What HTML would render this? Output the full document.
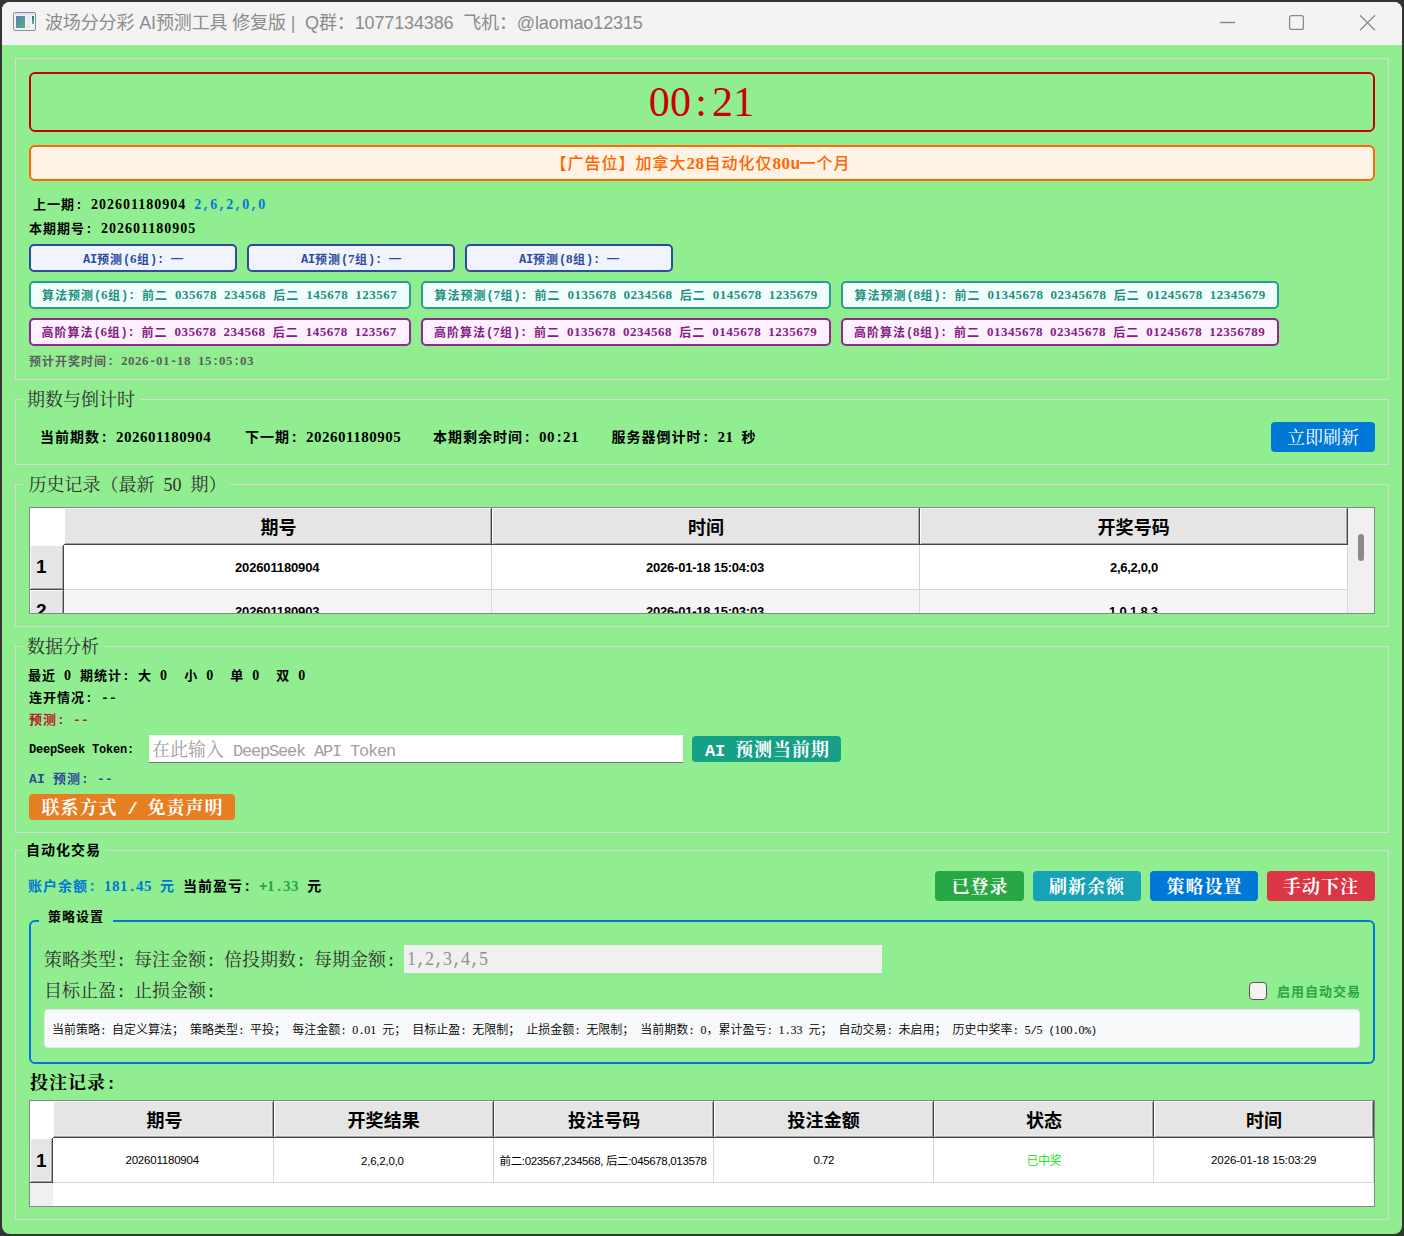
<!DOCTYPE html>
<html lang="zh-CN">
<head>
<meta charset="utf-8">
<title>波场分分彩 AI预测工具 修复版</title>
<style>
*{margin:0;padding:0;box-sizing:border-box}
html,body{width:1404px;height:1236px;overflow:hidden;background:#343434}
body{position:relative;font-family:"Liberation Serif","Noto Serif CJK SC",serif;color:#000}
#win{position:absolute;left:2px;top:2px;width:1400px;height:1232px;background:linear-gradient(#f3f3f3 0,#f3f3f3 43px,#90ee90 43px);border-radius:8px;overflow:hidden}
#tbar{position:absolute;left:0;top:0;width:1400px;height:43px;background:#f3f3f3}
#app{position:absolute;left:-2px;top:-2px;width:1404px;height:1236px}
.abs,.t,.b{position:absolute}
.t{white-space:pre;line-height:1}
.t i{font-style:normal;font-family:"Liberation Serif",serif}
.t b{font-family:"Liberation Mono",monospace}
.t s{text-decoration:none;position:relative;top:-2px}
.se{font-family:"Liberation Serif","Noto Serif CJK SC",serif}
.sa{font-family:"Liberation Sans","Noto Sans CJK SC",sans-serif}
.bd{font-weight:700}
.gb{position:absolute;border:1px solid #d9d9d9}
.gt{position:absolute;background:#90ee90;height:3px}
.box{position:absolute;border:2px solid;border-radius:5px}
.btn{position:absolute;border-radius:4px}
.tbl{position:absolute;background:#fff;border:1px solid #828790;overflow:hidden}
.th,.rh{position:absolute;background:#e5e5e5;border-right:1px solid #484848;border-bottom:1px solid #484848;box-shadow:inset 1px 1px 0 #fdfdfd,inset -1px -1px 0 #a2a2a2,inset -2px -2px 0 #ececec}
.vl{position:absolute;width:1px;background:#d8d8d8}
.hl{position:absolute;height:1px;background:#d8d8d8}
.s16bs{font-family:"Liberation Sans","Noto Sans CJK SC",sans-serif;font-size:16px;font-weight:500;letter-spacing:1px}.s16bs i{font-size:17px;letter-spacing:0.5px;font-weight:700}.s16bs b{font-size:16px;letter-spacing:-0.60px;font-weight:700}
.s13bs{font-family:"Liberation Sans","Noto Sans CJK SC",sans-serif;font-size:13px;font-weight:700;letter-spacing:1px}.s13bs i{font-size:14px;letter-spacing:1px;font-weight:700}.s13bs b{font-size:13px;letter-spacing:0.20px;font-weight:700}
.s12bs{font-family:"Liberation Sans","Noto Sans CJK SC",sans-serif;font-size:12px;font-weight:700;letter-spacing:1px}.s12bs i{font-size:13px;letter-spacing:0.5px;font-weight:700}.s12bs b{font-size:12px;letter-spacing:-0.20px;font-weight:700}.s12bs i,.s12bs b{position:relative;top:-1px}
.s18r{font-size:18px;font-weight:400;letter-spacing:0px}.s18r i{font-size:18px;letter-spacing:0px;font-weight:400}.s18r b{font-size:17px;letter-spacing:-1.20px;font-weight:400}
.s14bs{font-family:"Liberation Sans","Noto Sans CJK SC",sans-serif;font-size:14px;font-weight:700;letter-spacing:1px}.s14bs i{font-size:15px;letter-spacing:0.5px;font-weight:700}.s14bs b{font-size:14px;letter-spacing:-0.40px;font-weight:700}
.s18b{font-size:18px;font-weight:700;letter-spacing:1px}.s18b i{font-size:19px;letter-spacing:0.5px;font-weight:700}.s18b b{font-size:17px;letter-spacing:-0.20px;font-weight:700}
.s12rw350s{font-family:"Liberation Sans","Noto Sans CJK SC",sans-serif;font-size:12px;font-weight:350;letter-spacing:0px}.s12rw350s i{font-size:12px;letter-spacing:0px;font-weight:400}.s12rw350s b{font-size:11px;letter-spacing:-0.60px;font-weight:400}
</style>
</head>
<body>
<div id="win"><div id="tbar"></div><div id="app">
<svg class="abs" style="left:12px;top:11px" width="25" height="21" viewBox="0 0 25 21">
<defs><linearGradient id="g1" x1="0" y1="0" x2="1" y2="1"><stop offset="0" stop-color="#5a7fc0"/><stop offset="0.5" stop-color="#4f9a96"/><stop offset="1" stop-color="#62b06a"/></linearGradient>
<linearGradient id="g2" x1="0" y1="0" x2="0" y2="1"><stop offset="0" stop-color="#3f5fa8"/><stop offset="1" stop-color="#6cc060"/></linearGradient></defs>
<rect x="1.5" y="1.5" width="22" height="18" rx="1.5" fill="#eef2fa" stroke="#8a8e96" stroke-width="1"/>
<rect x="2.2" y="2.2" width="20.6" height="1.6" fill="#d9dee8"/>
<rect x="4" y="5" width="9" height="12" fill="url(#g1)"/>
<rect x="14.2" y="5" width="4.6" height="7" fill="#ececec"/>
<rect x="20" y="5" width="2" height="8" fill="url(#g2)"/>
<rect x="14.2" y="13.5" width="4" height="3.5" fill="#e6e6e6"/>
</svg>
<svg class="abs" style="left:1210px;top:8px" width="180" height="30" viewBox="0 0 180 30" fill="none" stroke="#8a8a8a" stroke-width="1.3">
<path d="M10 14.5H25"/>
<rect x="79.6" y="7.6" width="13.8" height="13.8" rx="2"/>
<path d="M150 7.2L165 22.2M165 7.2L150 22.2"/>
</svg>
<div class="gb" style="left:15px;top:58px;width:1374px;height:322px"></div>
<div class="gb" style="left:15px;top:399px;width:1374px;height:66px"></div><div class="gt" style="left:23px;top:398px;width:117px"></div>
<div class="gb" style="left:15px;top:484px;width:1374px;height:143px"></div><div class="gt" style="left:23px;top:483px;width:207px"></div>
<div class="gb" style="left:15px;top:646px;width:1374px;height:187px"></div><div class="gt" style="left:23px;top:645px;width:81px"></div>
<div class="gb" style="left:15px;top:850px;width:1374px;height:370px"></div><div class="gt" style="left:23px;top:849px;width:83px"></div>
<div class="box" style="left:29px;top:72px;width:1346px;height:60px;border-color:#cc0000;background:transparent;border-radius:6px;border-width:2px"></div>
<div class="box" style="left:29px;top:145px;width:1346px;height:36px;border-color:#ff6600;background:#fff3e6;border-radius:6px;border-width:2px"></div>
<div class="box" style="left:29px;top:244px;width:208px;height:28px;border-color:#2f4b9c;background:#f0f4ff;border-radius:5px;border-width:2px"></div>
<div class="box" style="left:247px;top:244px;width:208px;height:28px;border-color:#2f4b9c;background:#f0f4ff;border-radius:5px;border-width:2px"></div>
<div class="box" style="left:465px;top:244px;width:208px;height:28px;border-color:#2f4b9c;background:#f0f4ff;border-radius:5px;border-width:2px"></div>
<div class="box" style="left:29px;top:281px;width:382px;height:28px;border-color:#2a9d8f;background:#f0fffe;border-radius:5px;border-width:2px"></div>
<div class="box" style="left:29px;top:318px;width:382px;height:28px;border-color:#8e2a8e;background:#fdf0ff;border-radius:5px;border-width:2px"></div>
<div class="box" style="left:421px;top:281px;width:410px;height:28px;border-color:#2a9d8f;background:#f0fffe;border-radius:5px;border-width:2px"></div>
<div class="box" style="left:421px;top:318px;width:410px;height:28px;border-color:#8e2a8e;background:#fdf0ff;border-radius:5px;border-width:2px"></div>
<div class="box" style="left:841px;top:281px;width:438px;height:28px;border-color:#2a9d8f;background:#f0fffe;border-radius:5px;border-width:2px"></div>
<div class="box" style="left:841px;top:318px;width:438px;height:28px;border-color:#8e2a8e;background:#fdf0ff;border-radius:5px;border-width:2px"></div>
<div class="btn" style="left:1271px;top:422px;width:104px;height:30px;background:#0078d7;border-radius:4px"></div>
<div class="tbl" style="left:29px;top:507px;width:1346px;height:107px">
<div class="abs" style="left:1318px;top:0px;width:26px;height:105px;background:#f0f0f0;"></div>
<div class="abs" style="left:1328px;top:26px;width:6px;height:27px;background:#8a8a8a;border-radius:3px"></div>
<div class="abs" style="left:0px;top:82px;width:1318px;height:23px;background:#f5f5f5;"></div>
<div class="th" style="left:34px;top:0px;width:428px;height:37px"></div>
<div class="th" style="left:462px;top:0px;width:428px;height:37px"></div>
<div class="th" style="left:890px;top:0px;width:428px;height:37px"></div>
<div class="rh" style="left:0px;top:37px;width:34px;height:45px"></div>
<div class="rh" style="left:0px;top:82px;width:34px;height:45px"></div>
<div class="abs" style="left:461px;top:37px;width:1px;height:68px;background:#d8d8d8;"></div>
<div class="abs" style="left:889px;top:37px;width:1px;height:68px;background:#d8d8d8;"></div>
<div class="abs" style="left:1317px;top:37px;width:1px;height:68px;background:#d8d8d8;"></div>
<div class="abs" style="left:34px;top:81px;width:1284px;height:1px;background:#d8d8d8;"></div>
</div>
<div class="abs" style="left:149px;top:735px;width:534px;height:28px;background:#fff;border-bottom:1px solid #7a7a7a"></div>
<div class="btn" style="left:692px;top:736px;width:149px;height:26px;background:#16a085;border-radius:4px"></div>
<div class="btn" style="left:29px;top:794px;width:206px;height:26px;background:#e67e22;border-radius:4px"></div>
<div class="btn" style="left:935px;top:871px;width:89px;height:30px;background:#28a745;border-radius:4px"></div>
<div class="btn" style="left:1033px;top:871px;width:108px;height:30px;background:#17a2b8;border-radius:4px"></div>
<div class="btn" style="left:1150px;top:871px;width:108px;height:30px;background:#0078d7;border-radius:4px"></div>
<div class="btn" style="left:1267px;top:871px;width:108px;height:30px;background:#dc3545;border-radius:4px"></div>
<div class="box" style="left:29px;top:920px;width:1346px;height:144px;border-color:#0078d7;background:transparent;border-radius:6px;border-width:2px"></div>
<div class="abs" style="left:39px;top:919px;width:74px;height:4px;background:#90ee90;"></div>
<div class="abs" style="left:404px;top:945px;width:478px;height:28px;background:#f0f0f0;"></div>
<div class="abs" style="left:1249px;top:982px;width:18px;height:18px;background:#f3f3f3;border:1px solid #555;border-radius:4px"></div>
<div class="abs" style="left:44px;top:1009px;width:1316px;height:39px;background:#f8f9fa;border-radius:4px;border:1px solid #e4e6ea"></div>
<div class="tbl" style="left:29px;top:1100px;width:1346px;height:107px">
<div class="abs" style="left:0px;top:82px;width:23px;height:23px;background:#f0f0f0;"></div>
<div class="th" style="left:23px;top:0px;width:221px;height:37px"></div>
<div class="abs" style="left:243px;top:37px;width:1px;height:45px;background:#d8d8d8;"></div>
<div class="th" style="left:244px;top:0px;width:220px;height:37px"></div>
<div class="abs" style="left:463px;top:37px;width:1px;height:45px;background:#d8d8d8;"></div>
<div class="th" style="left:464px;top:0px;width:220px;height:37px"></div>
<div class="abs" style="left:683px;top:37px;width:1px;height:45px;background:#d8d8d8;"></div>
<div class="th" style="left:684px;top:0px;width:220px;height:37px"></div>
<div class="abs" style="left:903px;top:37px;width:1px;height:45px;background:#d8d8d8;"></div>
<div class="th" style="left:904px;top:0px;width:220px;height:37px"></div>
<div class="abs" style="left:1123px;top:37px;width:1px;height:45px;background:#d8d8d8;"></div>
<div class="th" style="left:1124px;top:0px;width:220px;height:37px"></div>
<div class="abs" style="left:1343px;top:37px;width:1px;height:45px;background:#d8d8d8;"></div>
<div class="rh" style="left:0px;top:37px;width:23px;height:45px"></div>
<div class="abs" style="left:23px;top:81px;width:1321px;height:1px;background:#d8d8d8;"></div>
</div>
<div class="t se" style="left:0;top:77px;width:1404px;height:50px;font-size:42px;color:#cc0000;line-height:50px"><span style="position:absolute;left:644.20px;width:30px;text-align:center">0</span><span style="position:absolute;left:665.55px;width:30px;text-align:center">0</span><span style="position:absolute;left:686.00px;width:30px;text-align:center">:</span><span style="position:absolute;left:707.40px;width:30px;text-align:center">2</span><span style="position:absolute;left:728.65px;width:30px;text-align:center">1</span></div>
<div class="t sa" style="left:45px;top:13.5px;font-size:18px;font-weight:400;color:#8c8c8c;letter-spacing:-0.13px;">波场分分彩 AI预测工具 修复版 |  Q群：1077134386  飞机：@laomao12315</div>
<div class="t se s16bs" style="left:550.5px;top:155px;color:#ff6600">【广告位】加拿大<i>28</i>自动化仅<i>80</i><b>u</b>一个月</div>
<div class="t se s13bs" style="left:33px;top:198px;color:#000">上一期<b>: </b><i>202601180904</i><b> </b><span style="color:#0078d7"><i>2</i><b>,</b><i>6</i><b>,</b><i>2</i><b>,</b><i>0</i><b>,</b><i>0</i></span></div>
<div class="t se s13bs" style="left:29px;top:222px;color:#000">本期期号<b>: </b><i>202601180905</i></div>
<div class="t se s12bs" style="left:83px;top:252.5px;color:#2f4b9c"><b>AI</b>预测<b>(</b><i>6</i>组<b>): </b><s>—</s></div>
<div class="t se s12bs" style="left:301px;top:252.5px;color:#2f4b9c"><b>AI</b>预测<b>(</b><i>7</i>组<b>): </b><s>—</s></div>
<div class="t se s12bs" style="left:519px;top:252.5px;color:#2f4b9c"><b>AI</b>预测<b>(</b><i>8</i>组<b>): </b><s>—</s></div>
<div class="t se s12bs" style="left:42px;top:289px;color:#21907f">算法预测<b>(</b><i>6</i>组<b>): </b>前二<b> </b><i>035678</i><b> </b><i>234568</i><b> </b>后二<b> </b><i>145678</i><b> </b><i>123567</i></div>
<div class="t se s12bs" style="left:41.5px;top:326px;color:#842084">高阶算法<b>(</b><i>6</i>组<b>): </b>前二<b> </b><i>035678</i><b> </b><i>234568</i><b> </b>后二<b> </b><i>145678</i><b> </b><i>123567</i></div>
<div class="t se s12bs" style="left:434.5px;top:289px;color:#21907f">算法预测<b>(</b><i>7</i>组<b>): </b>前二<b> </b><i>0135678</i><b> </b><i>0234568</i><b> </b>后二<b> </b><i>0145678</i><b> </b><i>1235679</i></div>
<div class="t se s12bs" style="left:434px;top:326px;color:#842084">高阶算法<b>(</b><i>7</i>组<b>): </b>前二<b> </b><i>0135678</i><b> </b><i>0234568</i><b> </b>后二<b> </b><i>0145678</i><b> </b><i>1235679</i></div>
<div class="t se s12bs" style="left:854.5px;top:289px;color:#21907f">算法预测<b>(</b><i>8</i>组<b>): </b>前二<b> </b><i>01345678</i><b> </b><i>02345678</i><b> </b>后二<b> </b><i>01245678</i><b> </b><i>12345679</i></div>
<div class="t se s12bs" style="left:854px;top:326px;color:#842084">高阶算法<b>(</b><i>8</i>组<b>): </b>前二<b> </b><i>01345678</i><b> </b><i>02345678</i><b> </b>后二<b> </b><i>01245678</i><b> </b><i>12356789</i></div>
<div class="t se s12bs" style="left:29px;top:355px;color:#5e5e5e">预计开奖时间<b>: </b><i>2026</i><b>-</b><i>01</i><b>-</b><i>18</i><b> </b><i>15</i><b>:</b><i>05</i><b>:</b><i>03</i></div>
<div class="t se s18r" style="left:27px;top:391px;color:#303030">期数与倒计时</div>
<div class="t se s18r" style="left:28.5px;top:476px;color:#303030">历史记录（最新<b> </b><i>50</i><b> </b>期）</div>
<div class="t se s18r" style="left:27px;top:638px;color:#303030">数据分析</div>
<div class="t se s14bs" style="left:26px;top:843px;color:#000">自动化交易</div>
<div class="t se s14bs" style="left:40px;top:430px;color:#000">当前期数<b>: </b><i>202601180904</i></div>
<div class="t se s14bs" style="left:245px;top:430px;color:#000">下一期<b>: </b><i>202601180905</i></div>
<div class="t se s14bs" style="left:433px;top:430px;color:#000">本期剩余时间<b>: </b><i>00</i><b>:</b><i>21</i></div>
<div class="t se s14bs" style="left:611.5px;top:430px;color:#000">服务器倒计时<b>: </b><i>21</i><b> </b>秒</div>
<div class="t se s18r" style="left:1287px;top:428.5px;color:#fff">立即刷新</div>
<div class="t sa" style="left:260.5px;top:518.5px;font-size:18px;font-weight:700;color:#000;letter-spacing:0.10px;">期号</div>
<div class="t sa" style="left:688px;top:518.5px;font-size:18px;font-weight:700;color:#000;letter-spacing:0.10px;">时间</div>
<div class="t sa" style="left:1097.5px;top:518.5px;font-size:18px;font-weight:700;color:#000;letter-spacing:0.10px;">开奖号码</div>
<div class="t sa" style="left:235px;top:561px;font-size:13px;font-weight:700;color:#000;letter-spacing:-0.14px;">202601180904</div>
<div class="t sa" style="left:646px;top:561px;font-size:13px;font-weight:700;color:#000;letter-spacing:-0.22px;">2026-01-18 15:04:03</div>
<div class="t sa" style="left:1110px;top:560.5px;font-size:13px;font-weight:700;color:#000;letter-spacing:-0.31px;">2,6,2,0,0</div>
<div class="t sa" style="left:36px;top:557px;font-size:19px;font-weight:700;color:#000;">1</div>
<div class="abs" style="left:0;top:601px;width:1404px;height:12px;overflow:hidden"><div class="t sa" style="left:36px;top:0px;font-size:19px;font-weight:700;color:#000;">2</div></div>
<div class="abs" style="left:0;top:605px;width:1404px;height:8px;overflow:hidden"><div class="t sa" style="left:235px;top:0px;font-size:13px;font-weight:700;color:#000;letter-spacing:-0.14px;">202601180903</div></div>
<div class="abs" style="left:0;top:605px;width:1404px;height:8px;overflow:hidden"><div class="t sa" style="left:646px;top:0px;font-size:13px;font-weight:700;color:#000;letter-spacing:-0.22px;">2026-01-18 15:03:03</div></div>
<div class="abs" style="left:0;top:604px;width:1404px;height:9px;overflow:hidden"><div class="t sa" style="left:1109px;top:0.5px;font-size:13px;font-weight:700;color:#000;letter-spacing:-0.19px;">1,0,1,8,3</div></div>
<div class="t se s13bs" style="left:28px;top:669px;color:#000">最近<b> </b><i>0</i><b> </b>期统计<b>: </b>大<b> </b><i>0</i><b>  </b>小<b> </b><i>0</i><b>  </b>单<b> </b><i>0</i><b>  </b>双<b> </b><i>0</i></div>
<div class="t se s13bs" style="left:29px;top:691px;color:#000">连开情况<b>: --</b></div>
<div class="t se s13bs" style="left:29px;top:713px;color:#b81a2e">预测<b>: --</b></div>
<div class="t se s12bs" style="left:29px;top:743.5px;color:#000"><b>DeepSeek Token:</b></div>
<div class="t se s18r" style="left:152px;top:741px;color:#a0a0a0">在此输入<b> DeepSeek API Token</b></div>
<div class="t se s18b" style="left:705px;top:741px;color:#fff"><b>AI </b>预测当前期</div>
<div class="t se s13bs" style="left:29px;top:772px;color:#2f4b9c"><b>AI </b>预测<b>: --</b></div>
<div class="t se s18b" style="left:41.5px;top:799px;color:#fff">联系方式<b> / </b>免责声明</div>
<div class="t se s14bs" style="left:28px;top:879px;color:#000"><span style="color:#0078d7">账户余额<b>: </b><i>181</i><b>.</b><i>45</i><b> </b>元</span><b> </b>当前盈亏<b>: </b><span style="color:#28a745"><b>+</b><i>1</i><b>.</b><i>33</i></span><b> </b>元</div>
<div class="t se s18b" style="left:951.5px;top:877.5px;color:#fff">已登录</div>
<div class="t se s18b" style="left:1049px;top:877.5px;color:#fff">刷新余额</div>
<div class="t se s18b" style="left:1166.5px;top:877.5px;color:#fff">策略设置</div>
<div class="t se s18b" style="left:1283px;top:877.5px;color:#fff">手动下注</div>
<div class="t se s13bs" style="left:48px;top:909.5px;color:#000">策略设置</div>
<div class="t se s18r" style="left:44px;top:950.5px;color:#303030">策略类型<b>: </b>每注金额<b>: </b>倍投期数<b>: </b>每期金额<b>:</b></div>
<div class="t se s18r" style="left:407px;top:950px;color:#909090"><i>1</i><b>,</b><i>2</i><b>,</b><i>3</i><b>,</b><i>4</i><b>,</b><i>5</i></div>
<div class="t se s18r" style="left:44px;top:982px;color:#303030">目标止盈<b>: </b>止损金额<b>:</b></div>
<div class="t se s13bs" style="left:1277px;top:985px;color:#28a745">启用自动交易</div>
<div class="t se s12rw350s" style="left:52px;top:1024px;color:#000">当前策略<b>: </b>自定义算法；<b> </b>策略类型<b>: </b>平投；<b> </b>每注金额<b>: </b><i>0</i><b>.</b><i>01</i><b> </b>元；<b> </b>目标止盈<b>: </b>无限制；<b> </b>止损金额<b>: </b>无限制；<b> </b>当前期数<b>: </b><i>0</i>，累计盈亏<b>: </b><i>1</i><b>.</b><i>33</i><b> </b>元；<b> </b>自动交易<b>: </b>未启用；<b> </b>历史中奖率<b>: </b><i>5</i><b>/</b><i>5</i><b> (</b><i>100</i><b>.</b><i>0</i><b>%)</b></div>
<div class="t se s18b" style="left:30px;top:1074px;color:#000">投注记录<b>:</b></div>
<div class="t sa" style="left:146.5px;top:1112px;font-size:18px;font-weight:700;color:#000;letter-spacing:0.10px;">期号</div>
<div class="t sa" style="left:347.5px;top:1112px;font-size:18px;font-weight:700;color:#000;letter-spacing:0.10px;">开奖结果</div>
<div class="t sa" style="left:568px;top:1112px;font-size:18px;font-weight:700;color:#000;letter-spacing:0.10px;">投注号码</div>
<div class="t sa" style="left:787.5px;top:1112px;font-size:18px;font-weight:700;color:#000;letter-spacing:0.10px;">投注金额</div>
<div class="t sa" style="left:1026px;top:1112px;font-size:18px;font-weight:700;color:#000;letter-spacing:0.10px;">状态</div>
<div class="t sa" style="left:1246px;top:1112px;font-size:18px;font-weight:700;color:#000;letter-spacing:0.10px;">时间</div>
<div class="t sa" style="left:125.5px;top:1155px;font-size:11.5px;font-weight:400;color:#000;letter-spacing:-0.21px;">202601180904</div>
<div class="t sa" style="left:361px;top:1155.5px;font-size:11.5px;font-weight:400;color:#000;letter-spacing:-0.22px;">2,6,2,0,0</div>
<div class="t sa" style="left:499.5px;top:1155.5px;font-size:11.5px;font-weight:400;color:#000;letter-spacing:-0.34px;">前二:023567,234568, 后二:045678,013578</div>
<div class="t sa" style="left:813.5px;top:1155px;font-size:11.5px;font-weight:400;color:#000;letter-spacing:-0.50px;">0.72</div>
<div class="t sa" style="left:1026.5px;top:1155px;font-size:12px;font-weight:350;color:#00e800;letter-spacing:-0.50px;">已中奖</div>
<div class="t sa" style="left:1211px;top:1155px;font-size:11.5px;font-weight:400;color:#000;letter-spacing:-0.08px;">2026-01-18 15:03:29</div>
<div class="t sa" style="left:36px;top:1150.5px;font-size:19px;font-weight:700;color:#000;">1</div>
</div></div>
</body>
</html>
